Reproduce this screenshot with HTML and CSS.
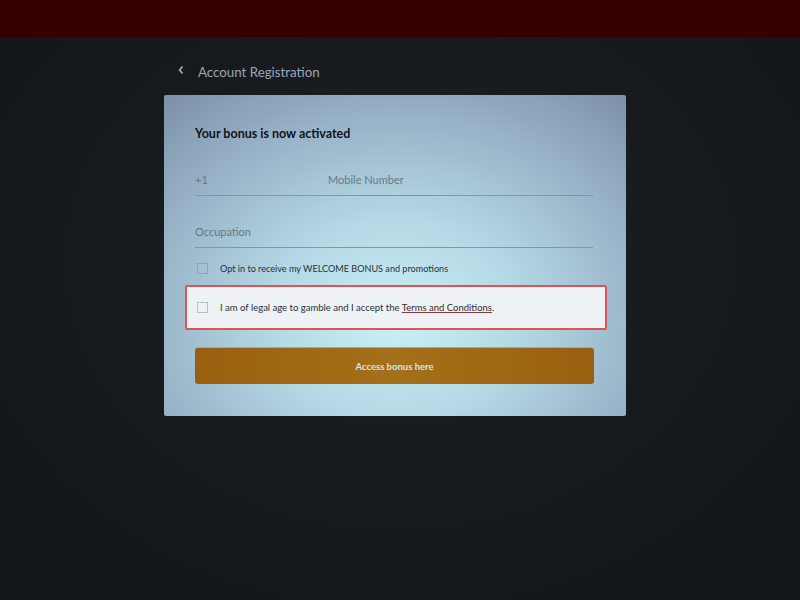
FILE: index.html
```html
<!DOCTYPE html>
<html>
<head>
<meta charset="utf-8">
<link rel="stylesheet" href="styles.css">
</head>
<body>
<div class="topbar"></div>
<main class="page">
  <div class="header">
    <svg class="back" width="8" height="10" viewBox="0 0 8 10"><path d="M5.5 1.5 L2.5 5 L5.5 8.5" fill="none" stroke="#aab4c2" stroke-width="1.5"/></svg>
    <span class="header-title">Account Registration</span>
  </div>
  <section class="card">
    <h1 class="title">Your bonus is now activated</h1>
    <div class="field phone">
      <span class="prefix">+1</span>
      <span class="placeholder">Mobile Number</span>
    </div>
    <div class="field">
      <span class="placeholder">Occupation</span>
    </div>
    <label class="check optin">
      <span class="box"></span>
      <span>Opt in to receive my WELCOME BONUS and promotions</span>
    </label>
    <label class="check highlight">
      <span class="box"></span>
      <span>I am of legal age to gamble and I accept the <u class="link">Terms and Conditions</u>.</span>
    </label>
    <button class="cta">Access bonus here</button>
  </section>
</main>
</body>
</html>
```
FILE: styles.css
```css
* { box-sizing: border-box; }
html, body { margin: 0; height: 100%; }
body {
  width: 800px;
  height: 600px;
  overflow: hidden;
  font-family: Lato, "Open Sans", sans-serif;
  background: radial-gradient(ellipse 520px 420px at 400px 260px, #1d2125 0%, #171a1d 60%, #131619 100%);
}
.topbar {
  height: 37px;
  background: #340000;
}
.page {
  width: 462px;
  margin-left: 164px;
  padding-top: 24px;
}
.header {
  display: flex;
  align-items: center;
  height: 22px;
  padding-left: 13px;
  gap: 13px;
}
.back { display: block; margin-top: -4px; }
.header-title {
  color: #9aa6b6;
  font-size: 13.3px;
}
.card {
  margin-top: 12px;
  height: 321px;
  border-radius: 2px;
  background: radial-gradient(ellipse 360px 290px at 232px 225px, #c9f0f6 0%, #b4d8e5 35%, #98b2c7 70%, #7d91a9 100%);
  padding: 30px 32px 0 31px;
}
.title {
  margin: 0;
  font-size: 12.5px;
  font-weight: 700;
  color: #111418;
  line-height: 18px;
}
.field {
  display: flex;
  height: 37px;
  margin-right: 1px;
  align-items: flex-end;
  padding-bottom: 9px;
  border-bottom: 1px solid #7f97ad;
  font-size: 11px;
  color: #66778a;
}
.phone { margin-top: 16px; }
.field + .field { height: 52px; }
.prefix { width: 133px; }
.check {
  display: flex;
  align-items: center;
  gap: 12px;
  font-size: 9.5px;
  color: #27313b;
  height: 20px;
  margin-top: 10px;
  padding-left: 2px;
}
.optin { font-size: 9.1px; }
.box {
  width: 11px;
  height: 11px;
  border: 1px solid #8ea3b6;
  background: transparent;
  flex: none;
}
.highlight {
  margin: 7px -13px 0 -10px;
  height: 45px;
  padding-left: 10px;
  gap: 12px;
  background: #eef2f4;
  border: 2px solid #df5357;
  border-radius: 2px;
}
.highlight .box { border-color: #a9c3d2; }
.link { color: #3a2a2a; text-decoration-color: #8a3a3a; }
.cta {
  display: block;
  width: 399px;
  height: 36px;
  margin-top: 18px;
  border: none;
  border-radius: 3px;
  background: linear-gradient(90deg, #98600e 0%, #a5701a 50%, #98600e 100%);
  color: #cfe6ef;
  font-family: Lato, "Open Sans", sans-serif;
  font-weight: 700;
  font-size: 9.5px;
  box-shadow: 0 -1px 0 #c9a066;
}
```
